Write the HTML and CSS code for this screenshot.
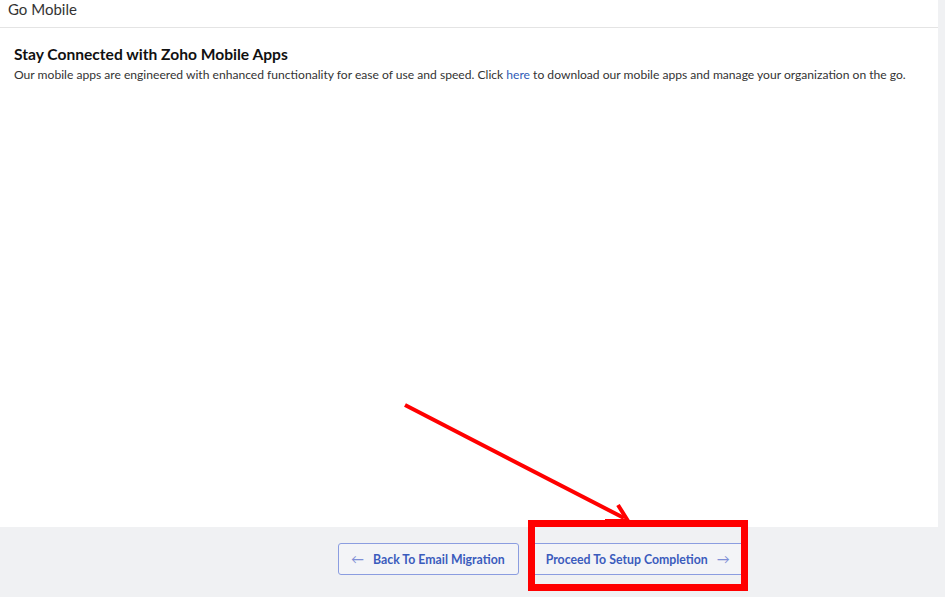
FILE: index.html
```html
<!DOCTYPE html>
<html>
<head>
<meta charset="utf-8">
<link rel="stylesheet" href="styles.css">
</head>
<body>
<div class="page">
  <div class="panel">
    <div class="header">Go Mobile</div>
    <div class="content">
      <h2 class="title">Stay Connected with Zoho Mobile Apps</h2>
      <p class="desc">Our mobile apps are engineered with enhanced functionality for ease of use and speed. Click <a class="link">here</a> to download our mobile apps and manage your organization on the go.</p>
    </div>
  </div>
  <div class="footer">
    <button class="btn"><span class="arr">&larr;</span>Back To Email Migration</button>
    <button class="btn btn-next">Proceed To Setup Completion<span class="arr arr-r">&rarr;</span></button>
  </div>
  <div class="redbox"></div>
  <svg class="annot" width="945" height="597" viewBox="0 0 945 597">
    <line x1="405" y1="405" x2="624" y2="518" stroke="#f00" stroke-width="4"/>
    <polyline points="605,521 628,521 618,505" fill="none" stroke="#f00" stroke-width="4" stroke-linejoin="miter"/>
  </svg>
</div>
</body>
</html>
```
FILE: styles.css
```css
html, body {
  margin: 0;
  padding: 0;
  background: #f0f1f3;
}
.page {
  position: relative;
  width: 945px;
  height: 597px;
  overflow: hidden;
  font-family: Lato, "Open Sans", sans-serif;
  color: #222;
}
.panel {
  width: 938px;
  height: 527px;
  background: #fff;
  box-sizing: border-box;
}
.header {
  height: 28px;
  box-sizing: border-box;
  border-bottom: 1px solid #e4e4e4;
  padding-left: 8px;
  font-size: 15px;
  line-height: 18px;
  color: #333;
}
.content {
  padding: 17px 14px 0;
}
.title {
  margin: 0;
  font-size: 15.6px;
  font-weight: 700;
  line-height: 18px;
  color: #111;
}
.desc {
  margin: 3px 0 0;
  font-size: 12.1px;
  line-height: 18px;
  color: #333;
  white-space: nowrap;
}
.link {
  color: #2f5bb7;
}
.footer {
  display: flex;
  gap: 12px;
  padding: 16px 0 0 338px;
}
.btn {
  height: 32px;
  box-sizing: border-box;
  border: 1px solid #8b9de0;
  border-radius: 3px;
  background: #f3f4f7;
  font-family: Lato, "Open Sans", sans-serif;
  font-weight: 700;
  font-size: 12.3px;
  color: #3b5cbd;
  padding: 0 13px 0 12px;
  display: flex;
  align-items: center;
  white-space: nowrap;
}
.btn-next {
  width: 212px;
  padding: 0 13px 0 15px;
  border-radius: 0;
  border-left: none;
  border-right: none;
  justify-content: space-between;
}
.arr {
  font-weight: 400;
  color: #7f8fd6;
  margin-right: 9px;
  font-size: 13px;
}
.arr-r {
  margin: 0 0 0 8px;
}
.redbox {
  position: absolute;
  left: 528px;
  top: 520px;
  width: 220px;
  height: 71px;
  box-sizing: border-box;
  border: 7px solid #f00;
}
.annot {
  position: absolute;
  left: 0;
  top: 0;
}
```
